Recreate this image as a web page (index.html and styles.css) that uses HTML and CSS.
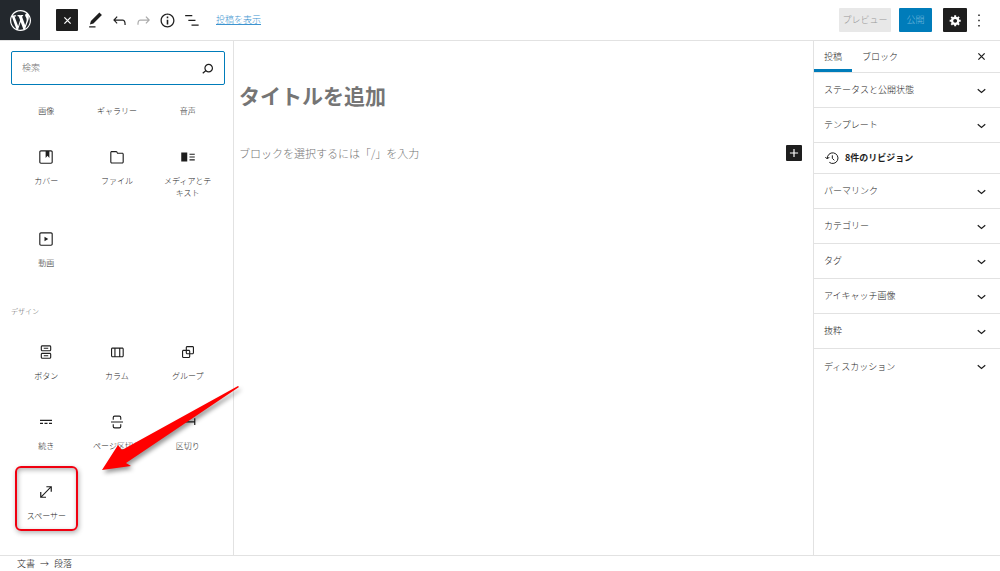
FILE: index.html
```html
<!DOCTYPE html>
<html lang="ja">
<head>
    <meta charset="UTF-8">
    <meta name="viewport" content="width=device-width, initial-scale=1.0">
    <title>投稿を編集</title>
    <link rel="stylesheet" href="styles.css">
</head>
<body>
    <div class="editor">
        <header class="header">
            <a class="logo" href="#" aria-label="WordPress">
                <svg viewBox="0 0 20 20"><path d="M20 10c0-5.51-4.49-10-10-10C4.48 0 0 4.49 0 10c0 5.52 4.48 10 10 10 5.51 0 10-4.48 10-10zM7.78 15.37L4.37 6.22c.55-.02 1.17-.08 1.17-.08.5-.06.44-1.13-.06-1.11 0 0-1.45.11-2.37.11-.18 0-.37 0-.58-.01C4.12 2.69 6.87 1.11 10 1.11c2.33 0 4.45.87 6.05 2.34-.68-.11-1.65.39-1.65 1.58 0 .74.45 1.36.9 2.1.35.61.55 1.36.55 2.46 0 1.49-1.4 5-1.4 5l-3.03-8.37c.54-.02.82-.17.82-.17.5-.05.44-1.25-.06-1.22 0 0-1.44.12-2.38.12-.87 0-2.33-.12-2.33-.12-.5-.03-.56 1.2-.06 1.22l.92.08 1.26 3.41zM17.41 10c.24-.64.74-1.87.43-4.25.7 1.29 1.05 2.71 1.05 4.25 0 3.29-1.73 6.24-4.4 7.78.97-2.59 1.94-5.2 2.92-7.78zM6.1 18.09C3.12 16.65 1.11 13.53 1.11 10c0-1.3.23-2.48.72-3.59C3.25 10.3 4.67 14.2 6.1 18.09zm4.03-6.63l2.58 6.98c-.86.29-1.76.45-2.71.45-.79 0-1.57-.11-2.29-.33.81-2.38 1.62-4.74 2.42-7.1z"/></svg>
            </a>
            <div class="toolbar">
                <button class="tool tool-active" aria-label="閉じる">
                    <svg viewBox="0 0 24 24"><path d="M7 7l10 10M17 7L7 17" class="line"/></svg>
                </button>
                <button class="tool" aria-label="ツール">
                    <svg viewBox="0 0 24 24"><path d="M20.1 5.1L16.9 2 6.2 12.7l-1.3 4.4 4.5-1.3L20.1 5.1zM4 20.8h8v-1.5H4v1.5z"/></svg>
                </button>
                <button class="tool" aria-label="元に戻す">
                    <svg viewBox="0 0 24 24"><path d="M18.3 11.7c-.6-.6-1.4-.9-2.3-.9H6.7l2.9-3.3-1.1-1-4.5 5L8.5 16l1-1-2.7-2.7H16c.5 0 .9.2 1.3.5 1 1 1 3.4 1 4.5v.3h1.5v-.2c0-1.5 0-4.3-1.5-5.7z"/></svg>
                </button>
                <button class="tool" aria-label="やり直す" disabled>
                    <svg viewBox="0 0 24 24"><path d="M15.6 6.5l-1.1 1 2.9 3.3H8c-.9 0-1.7.3-2.3.9-1.4 1.5-1.4 4.2-1.4 5.6v.2h1.5v-.3c0-1.1 0-3.5 1-4.5.3-.3.7-.5 1.3-.5h9.2L14.5 15l1.1 1.1 4.6-4.6-4.6-5z"/></svg>
                </button>
                <button class="tool" aria-label="詳細">
                    <svg viewBox="0 0 24 24"><path d="M12 3.2c-4.8 0-8.8 3.9-8.8 8.8 0 4.8 3.9 8.8 8.8 8.8 4.8 0 8.8-3.9 8.8-8.8 0-4.8-4-8.8-8.8-8.8zm0 16c-4 0-7.2-3.3-7.2-7.2C4.8 8 8 4.8 12 4.8s7.2 3.3 7.2 7.2c0 4-3.2 7.2-7.2 7.2zM11 17h2v-6h-2v6zm0-8h2V7h-2v2z"/></svg>
                </button>
                <button class="tool" aria-label="アウトライン">
                    <svg viewBox="0 0 24 24"><path d="M4 5h9v1.5H4zM8 11h9v1.5H8zM12 17h9v1.5h-9z"/></svg>
                </button>
                <a class="view-link" href="#">投稿を表示</a>
            </div>
            <div class="actions">
                <button class="btn btn-preview">プレビュー</button>
                <button class="btn btn-publish">公開</button>
                <button class="btn btn-settings" aria-label="設定">
                    <svg viewBox="0 0 20 20"><path d="M18 12h-2.180c-.17.7-.44 1.350-.81 1.930l1.540 1.540-2.100 2.100-1.540-1.540c-.58.360-1.230.630-1.910.790V19H8v-2.180c-.68-.16-1.330-.43-1.910-.79l-1.540 1.540-2.120-2.120 1.540-1.540c-.36-.58-.63-1.230-.79-1.910H1V9.030h2.170c.16-.7.44-1.350.8-1.940L2.430 5.550l2.100-2.100 1.540 1.540c.58-.37 1.240-.64 1.930-.81V2h3v2.180c.68.160 1.330.43 1.910.79l1.540-1.540 2.120 2.120-1.540 1.540c.36.590.64 1.240.8 1.940H18V12zm-8.500 1.500c1.660 0 3-1.340 3-3s-1.340-3-3-3-3 1.340-3 3 1.340 3 3 3z"/></svg>
                </button>
                <button class="more" aria-label="オプション">
                    <svg viewBox="0 0 24 24"><path d="M11 4h2v2h-2zM11 11h2v2h-2zM11 18h2v2h-2z"/></svg>
                </button>
            </div>
        </header>

        <div class="body">
            <aside class="inserter">
                <label class="search">
                    <input type="search" placeholder="検索" aria-label="検索">
                    <svg viewBox="0 0 24 24"><path d="M13.5 6C10.5 6 8 8.5 8 11.5c0 1.1.3 2.1.9 3l-3.4 3 1 1.1 3.4-2.9c1 .9 2.2 1.4 3.6 1.4 3 0 5.5-2.5 5.5-5.5C19 8.5 16.5 6 13.5 6zm0 9.5c-2.2 0-4-1.8-4-4s1.8-4 4-4 4 1.8 4 4-1.8 4-4 4z"/></svg>
                </label>

                <!-- Media blocks -->
                <div class="blocks blocks-media">
                    <button class="block block-cut">画像</button>
                    <button class="block block-cut">ギャラリー</button>
                    <button class="block block-cut">音声</button>
                    <button class="block">
                        <svg viewBox="0 0 24 24"><path d="M18.7 3H5.3C4 3 3 4 3 5.3v13.4C3 20 4 21 5.3 21h13.4c1.3 0 2.3-1 2.3-2.3V5.3C21 4 20 3 18.7 3zm.8 15.7c0 .4-.4.8-.8.8H5.3c-.4 0-.8-.4-.8-.8V5.3c0-.4.4-.8.8-.8h6.2v8.9l2.5-3.1 2.5 3.1V4.5h2.2c.4 0 .8.4.8.8v13.4z"/></svg>
                        カバー
                    </button>
                    <button class="block">
                        <svg viewBox="0 0 24 24"><path d="M19 6.2h-5.9l-.6-1.1c-.3-.7-1-1.1-1.8-1.1H5c-1.1 0-2 .9-2 2v12.8c0 1.1.9 2 2 2h14c1.1 0 2-.9 2-2V8.2c0-1.1-.9-2-2-2zm.5 12.6c0 .3-.2.5-.5.5H5c-.3 0-.5-.2-.5-.5V6c0-.3.2-.5.5-.5h5.8c.2 0 .4.1.4.3l1 2H19c.3 0 .5.2.5.5v10.5z"/></svg>
                        ファイル
                    </button>
                    <button class="block">
                        <svg viewBox="0 0 24 24"><path d="M3 18h8V6H3v12zM14 7.5V9h7V7.5h-7zm0 5.3h7v-1.5h-7v1.5zm0 3.7h7V15h-7v1.5z"/></svg>
                        メディアとテキスト
                    </button>
                    <button class="block">
                        <svg viewBox="0 0 24 24"><path d="M18.7 3H5.3C4 3 3 4 3 5.3v13.4C3 20 4 21 5.3 21h13.4c1.3 0 2.3-1 2.3-2.3V5.3C21 4 20 3 18.7 3zm.8 15.7c0 .4-.4.8-.8.8H5.3c-.4 0-.8-.4-.8-.8V5.3c0-.4.4-.8.8-.8h13.4c.4 0 .8.4.8.8v13.4zM10 15l5-3-5-3v6z"/></svg>
                        動画
                    </button>
                </div>

                <!-- Design blocks -->
                <h2 class="section-title">デザイン</h2>
                <div class="blocks">
                    <button class="block">
                        <svg viewBox="0 0 24 24"><path d="M17 3H7c-1.1 0-2 .9-2 2v4c0 1.1.9 2 2 2h10c1.1 0 2-.9 2-2V5c0-1.1-.9-2-2-2zm.5 6c0 .3-.2.5-.5.5H7c-.3 0-.5-.2-.5-.5V5c0-.3.2-.5.5-.5h10c.3 0 .5.2.5.5v4zM9 6.300h6v1.500H9zM17 13H7c-1.1 0-2 .9-2 2v4c0 1.1.9 2 2 2h10c1.1 0 2-.9 2-2v-4c0-1.1-.9-2-2-2zm.5 6c0 .3-.2.5-.5.5H7c-.3 0-.5-.2-.5-.5v-4c0-.3.2-.5.5-.5h10c.3 0 .5.2.5.5v4zM9 16.300h6v1.500H9z"/></svg>
                        ボタン
                    </button>
                    <button class="block">
                        <svg viewBox="0 0 24 24"><path d="M19 6H6c-1.1 0-2 .9-2 2v9c0 1.1.9 2 2 2h13c1.1 0 2-.9 2-2V8c0-1.1-.9-2-2-2zm-4.1 1.500v10H10v-10h4.900zM5.500 17V8c0-.3.2-.5.5-.5h2.500v10H6c-.3 0-.5-.2-.5-.5zm14 0c0 .3-.2.5-.5.5h-2.600v-10H19c.3 0 .5.2.5.5v9z"/></svg>
                        カラム
                    </button>
                    <button class="block">
                        <svg viewBox="0 0 24 24"><path d="M18 4h-7c-1.1 0-2 .9-2 2v3H6c-1.1 0-2 .9-2 2v7c0 1.1.9 2 2 2h7c1.1 0 2-.9 2-2v-3h3c1.1 0 2-.9 2-2V6c0-1.1-.9-2-2-2zm-4.500 14c0 .3-.2.5-.5.5H6c-.3 0-.5-.2-.5-.5v-7c0-.3.2-.5.5-.5h3V13c0 1.1.9 2 2 2h2.500v3zm0-4.500H11c-.3 0-.5-.2-.5-.5v-2.500H13c.3 0 .5.2.5.5v2.500zm5-.5c0 .3-.2.5-.5.5h-3V11c0-1.1-.9-2-2-2h-2.500V6c0-.3.2-.5.5-.5h7c.3 0 .5.2.5.5v7z"/></svg>
                        グループ
                    </button>
                    <button class="block">
                        <svg viewBox="0 0 24 24"><path d="M4 9v1.500h16V9H4zm12 5.500h4V13h-4v1.500zm-6 0h4V13h-4v1.500zm-6 0h4V13H4v1.500z"/></svg>
                        続き
                    </button>
                    <button class="block">
                        <svg viewBox="0 0 24 24"><path d="M7 9V6c0-1 .8-1.800 1.800-1.800h6.400c1 0 1.800.8 1.800 1.800v3M7 15v3c0 1 .8 1.800 1.800 1.800h6.400c1 0 1.800-.8 1.800-1.800v-3M4 12h16" class="line"/></svg>
                        ページ区切り
                    </button>
                    <button class="block">
                        <svg viewBox="0 0 24 24"><path d="M20.200 7v4H3.800V7H2.200v9h1.600v-3.500h16.400V16h1.600V7z"/></svg>
                        区切り
                    </button>
                    <button class="block block-marked">
                        <svg viewBox="0 0 24 24"><path d="M12.500 4.200v1.600h4.700L5.800 17.200V12H4.200v7.800H12v-1.600H6.800L18.200 6.800v4.700h1.600V4.200z"/></svg>
                        スペーサー
                    </button>
                </div>

                <svg class="arrow" viewBox="0 0 140 86"><path d="M137 0L21 64 17 59 1 84 30 80 25 77 138 1z"/></svg>
            </aside>

            <main class="canvas">
                <h1 class="post-title">タイトルを追加</h1>
                <div class="paragraph">
                    <p>ブロックを選択するには「/」を入力</p>
                    <button class="add" aria-label="ブロックを追加">
                        <svg viewBox="0 0 24 24"><path d="M12 5v14M5 12h14" class="line"/></svg>
                    </button>
                </div>
            </main>

            <aside class="sidebar">
                <div class="tabs">
                    <button class="tab tab-current">投稿</button>
                    <button class="tab">ブロック</button>
                    <button class="close" aria-label="設定を閉じる">
                        <svg viewBox="0 0 24 24"><path d="M7 7l10 10M17 7L7 17" class="line"/></svg>
                    </button>
                </div>
                <button class="panel">ステータスと公開状態<svg viewBox="0 0 24 24"><path d="M6 10l6 5 6-5" class="line"/></svg></button>
                <button class="panel">テンプレート<svg viewBox="0 0 24 24"><path d="M6 10l6 5 6-5" class="line"/></svg></button>
                <a class="revisions" href="#">
                    <svg viewBox="0 0 24 24"><path d="M5 13a8 8 0 1 1 3 5.500M2 10.500l3 3 3-3M12.500 8v4.500l3 3" class="line"/></svg>
                    8件のリビジョン
                </a>
                <button class="panel">パーマリンク<svg viewBox="0 0 24 24"><path d="M6 10l6 5 6-5" class="line"/></svg></button>
                <button class="panel">カテゴリー<svg viewBox="0 0 24 24"><path d="M6 10l6 5 6-5" class="line"/></svg></button>
                <button class="panel">タグ<svg viewBox="0 0 24 24"><path d="M6 10l6 5 6-5" class="line"/></svg></button>
                <button class="panel">アイキャッチ画像<svg viewBox="0 0 24 24"><path d="M6 10l6 5 6-5" class="line"/></svg></button>
                <button class="panel">抜粋<svg viewBox="0 0 24 24"><path d="M6 10l6 5 6-5" class="line"/></svg></button>
                <button class="panel">ディスカッション<svg viewBox="0 0 24 24"><path d="M6 10l6 5 6-5" class="line"/></svg></button>
            </aside>
        </div>

        <footer class="footer">
            <span>文書</span>
            <span>→</span>
            <span>段落</span>
        </footer>
    </div>
</body>
</html>
```
FILE: styles.css
```css
* {
    box-sizing: border-box;
}

body {
    margin: 0;
    background-color: #fff;
    color: #1e1e1e;
    font-family: "Noto Sans CJK JP", sans-serif;
    font-size: 9px;
    font-weight: 300;
    line-height: 12px;
}

button,
input {
    padding: 0;
    border: none;
    background: none;
    color: inherit;
    font: inherit;
}

button {
    cursor: pointer;
}

svg {
    display: block;
    flex: none;
    width: 19px;
    height: 19px;
    fill: currentColor;
}

.line {
    fill: none;
    stroke: currentColor;
    stroke-width: 2;
}

.editor {
    display: flex;
    flex-direction: column;
    height: 100vh;
}

/* Header */
.header {
    display: flex;
    align-items: center;
    border-bottom: 1px solid #e2e2e2;
}

.logo {
    display: flex;
    align-items: center;
    justify-content: center;
    width: 40px;
    height: 40px;
    background-color: #23282d;
    color: #fff;
}

.logo svg {
    width: 21px;
    height: 21px;
}

.toolbar {
    display: flex;
    align-items: center;
    gap: 2px;
    margin-left: 16px;
}

.tool {
    display: flex;
    align-items: center;
    justify-content: center;
    width: 22px;
    height: 22px;
}

.tool:disabled {
    color: #aaa;
}

.tool-active {
    margin-right: 4px;
    border-radius: 1px;
    background-color: #1e1e1e;
    color: #fff;
}

.tool-active svg {
    width: 15px;
    height: 15px;
}

.view-link {
    margin-left: 12px;
    color: #3c94d0;
}

.actions {
    display: flex;
    align-items: center;
    margin-left: auto;
    padding-right: 12px;
}

.btn {
    display: flex;
    align-items: center;
    justify-content: center;
    height: 24px;
    border-radius: 1px;
}

.btn-preview {
    width: 52px;
    margin-right: 8px;
    background-color: #e8e8e8;
    color: #999;
}

.btn-publish {
    width: 33px;
    margin-right: 11px;
    background-color: #007cba;
    color: #72b8dc;
}

.btn-settings {
    width: 24px;
    background-color: #1e1e1e;
    color: #fff;
}

.btn-settings svg {
    width: 13px;
    height: 13px;
}

.more {
    margin-left: 3px;
}

.more svg {
    width: 18px;
}

/* Main area */
.body {
    display: flex;
    flex: 1;
    min-height: 0;
}

/* Block inserter */
.inserter {
    position: relative;
    width: 234px;
    padding: 10px 10px 10px 11px;
    border-right: 1px solid #e2e2e2;
}

.search {
    display: flex;
    align-items: center;
    height: 34px;
    margin-right: -2px;
    padding: 0 7px 0 10px;
    border: 1px solid #007cba;
    border-radius: 2px;
}

.search input {
    flex: 1;
    min-width: 0;
    outline: none;
}

.search input::placeholder {
    color: #757575;
}

.blocks {
    display: grid;
    grid-template-columns: repeat(3, 1fr);
}

.blocks-media {
    margin-top: 20px;
}

.block {
    display: flex;
    flex-direction: column;
    align-items: center;
    gap: 8px;
    padding: 15px 8px;
    font-size: 8px;
}

.block svg {
    width: 20px;
    height: 20px;
    padding: 1px;
}

.block-cut {
    padding-top: 0;
}

.block-marked {
    position: relative;
}

/* Red highlight around the spacer block */
.block-marked::after {
    content: "";
    position: absolute;
    inset: -1px 4px 6px 4px;
    border: 2px solid #f00010;
    border-radius: 6px;
    box-shadow: 1px 2px 5px rgba(0, 0, 0, 0.3), inset 1px 2px 5px rgba(0, 0, 0, 0.3);
}

.section-title {
    margin: 21px 0 10px;
    color: #555;
    font-size: 7px;
    font-weight: 300;
}

/* Red pointer, runs over the edge of the panel */
.arrow {
    position: absolute;
    left: 101px;
    top: 345px;
    z-index: 1;
    width: 140px;
    height: 86px;
    overflow: visible;
    fill: #f00;
    filter: drop-shadow(2px 3px 2px rgba(0, 0, 0, 0.4));
}

/* Post content */
.canvas {
    flex: 1;
    padding: 39px 11px 0 5px;
}

.post-title {
    margin: 0;
    color: #757575;
    font-size: 21px;
    font-weight: 700;
    line-height: 30px;
}

.paragraph {
    display: flex;
    align-items: center;
    justify-content: space-between;
    margin-top: 35px;
    color: #757575;
    font-size: 11px;
}

.paragraph p {
    margin: 0;
}

.add {
    display: flex;
    align-items: center;
    justify-content: center;
    width: 16px;
    height: 16px;
    border-radius: 1px;
    background-color: #1e1e1e;
    color: #fff;
}

.add svg {
    width: 14px;
    height: 14px;
}

/* Settings sidebar */
.sidebar {
    width: 187px;
    border-left: 1px solid #e2e2e2;
}

.tabs {
    display: flex;
    height: 32px;
    border-bottom: 1px solid #e2e2e2;
}

.tab {
    padding: 0 10px;
}

.tab-current {
    box-shadow: inset 0 -3px 0 #007cba;
}

.close {
    margin-left: auto;
    padding-right: 11px;
}

.close svg,
.panel svg {
    width: 15px;
    height: 15px;
}

.panel {
    display: flex;
    align-items: center;
    justify-content: space-between;
    width: 100%;
    height: 35px;
    padding: 0 11px 0 10px;
    border-bottom: 1px solid #e2e2e2;
}

.panel:last-child {
    border-bottom: none;
}

.revisions {
    display: flex;
    align-items: center;
    gap: 5px;
    height: 31px;
    padding: 0 10px;
    border-bottom: 1px solid #e2e2e2;
    color: inherit;
    font-weight: 700;
    text-decoration: none;
}

.revisions svg {
    width: 16px;
    height: 16px;
}

.revisions .line,
.block .line {
    stroke-width: 1.5;
}

/* Breadcrumb */
.footer {
    display: flex;
    align-items: center;
    gap: 5px;
    height: 16px;
    padding-left: 17px;
    border-top: 1px solid #e2e2e2;
}
```
